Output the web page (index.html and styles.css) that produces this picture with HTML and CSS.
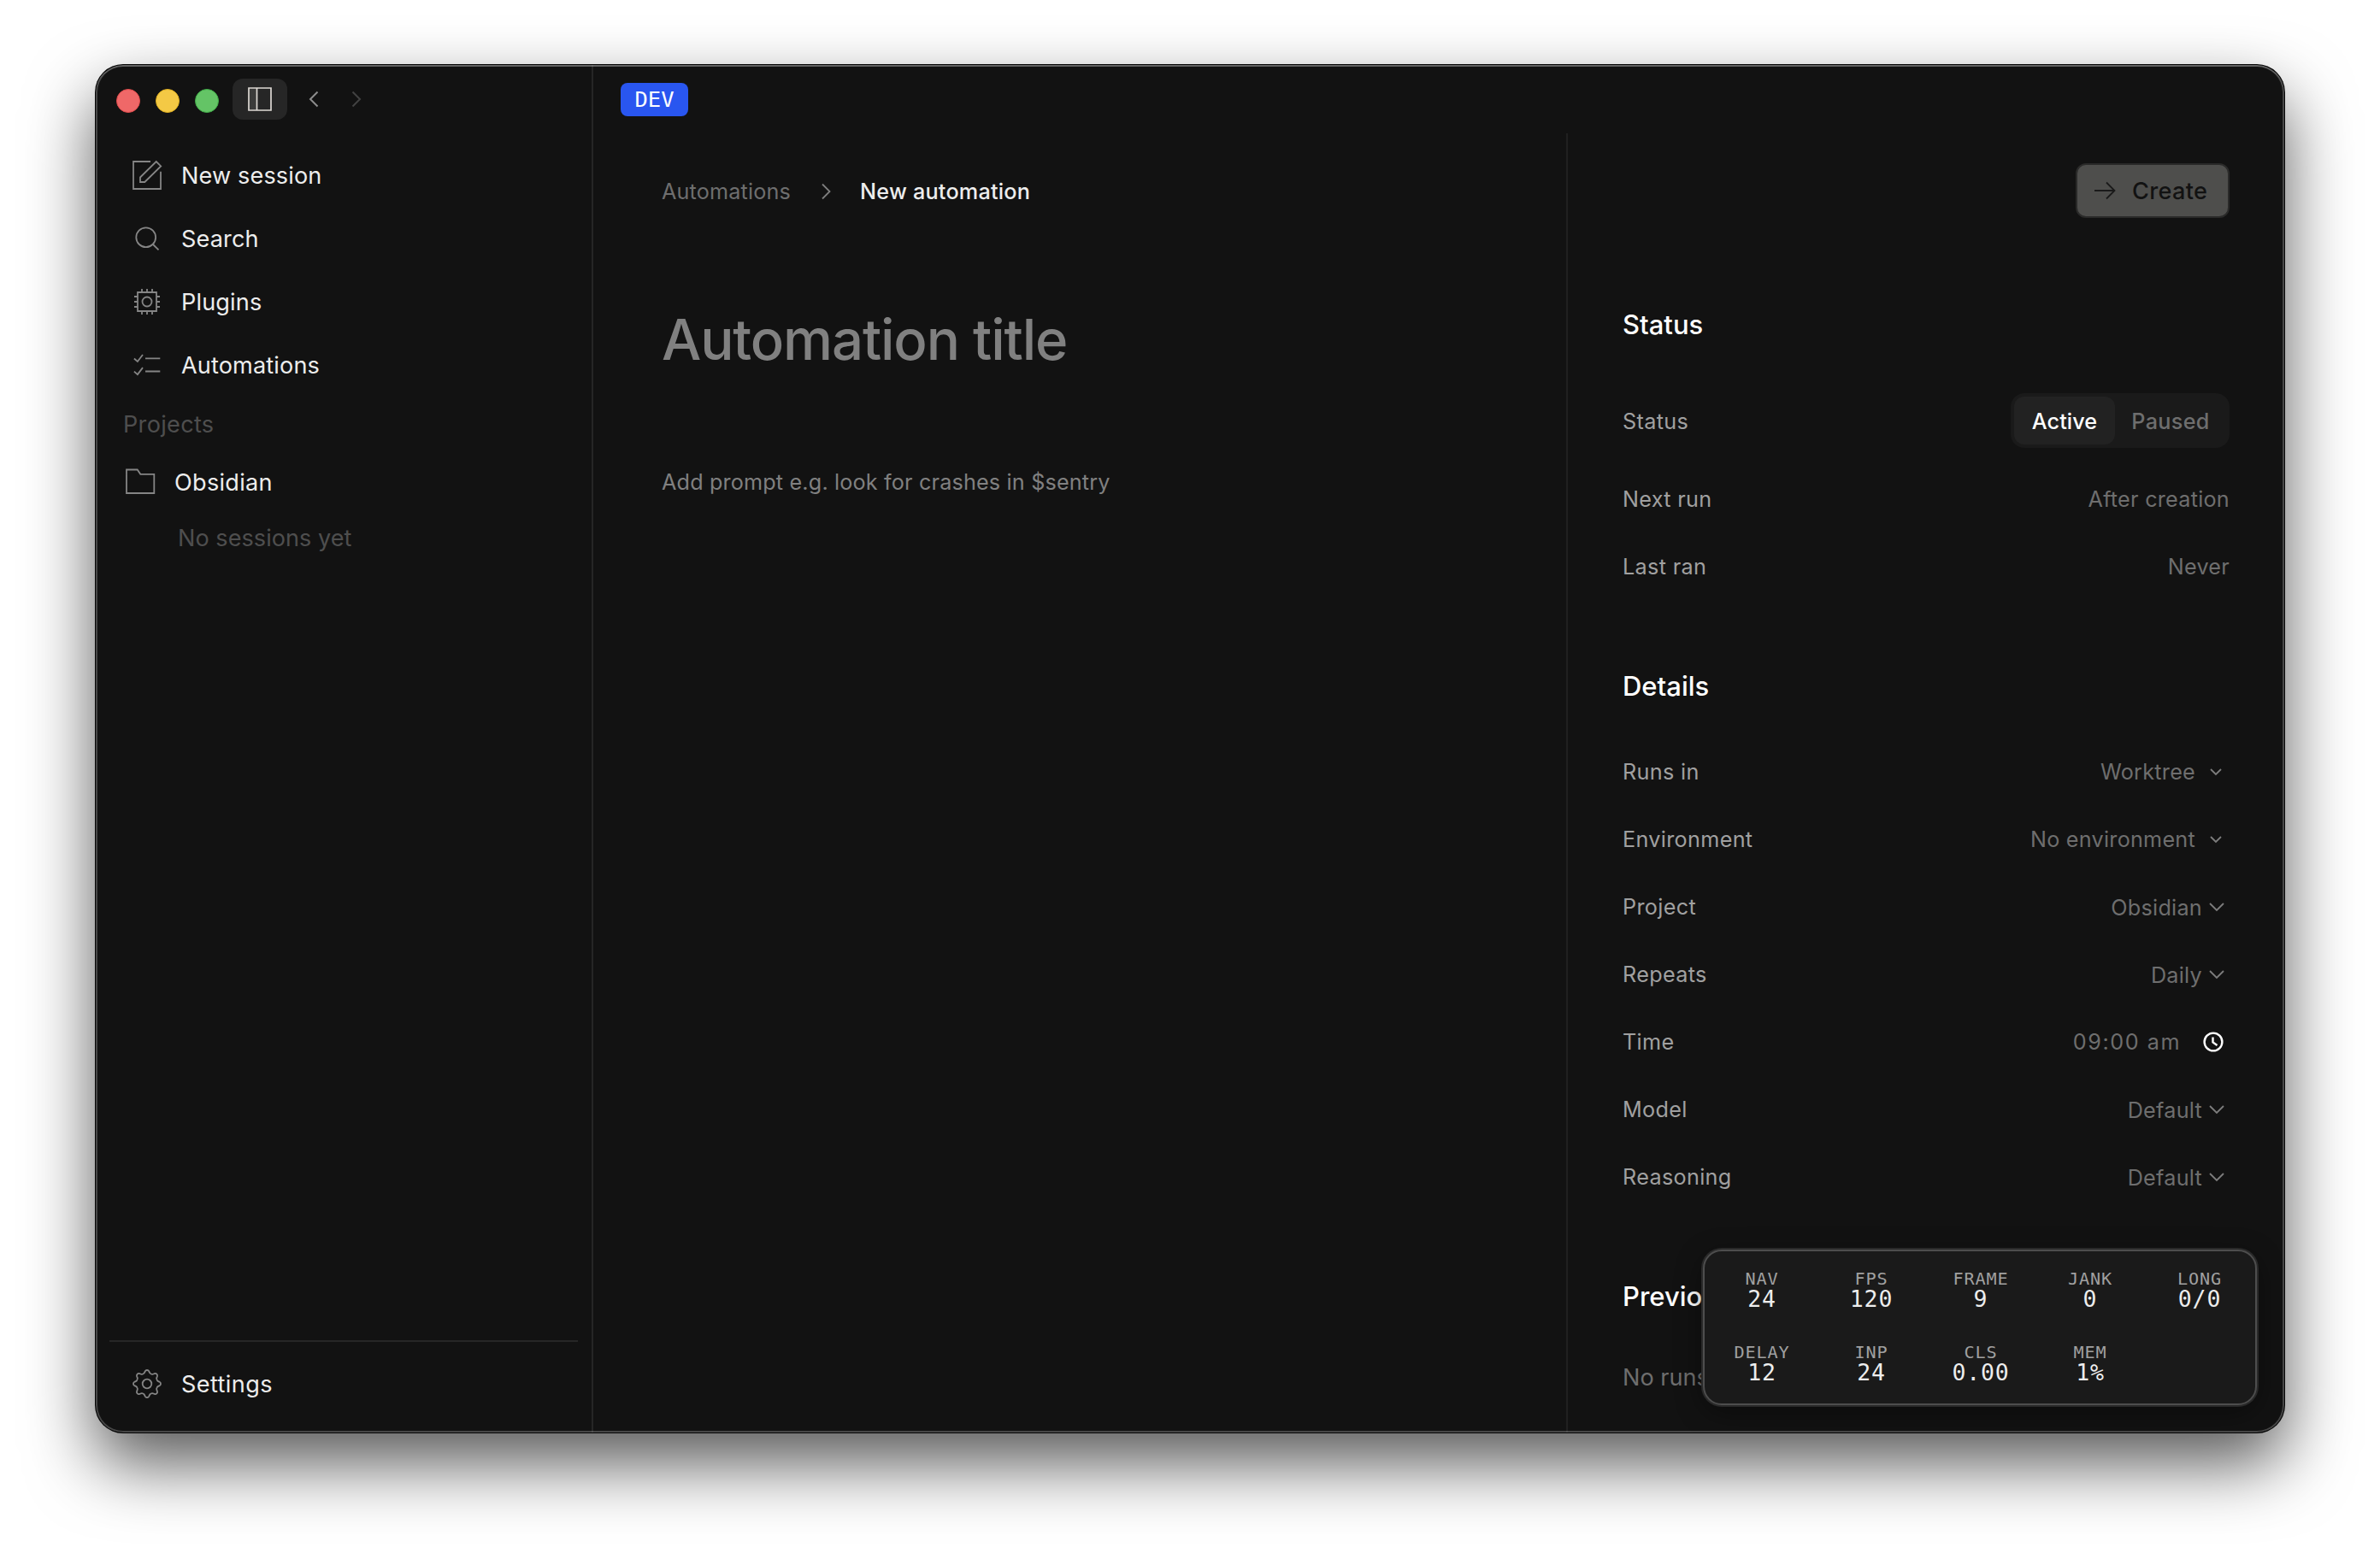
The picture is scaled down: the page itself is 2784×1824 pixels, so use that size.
FILE: index.html
```html
<!DOCTYPE html>
<html lang="en">
<head>
<meta charset="utf-8">
<title>New automation</title>
<link rel="stylesheet" href="styles.css">
</head>
<body>
<div class="window">
  <aside class="sidebar">
    <div class="titlebar">
      <div class="lights"><i class="light red"></i><i class="light yellow"></i><i class="light green"></i></div>
      <button class="toggle"><svg width="28" height="28" viewBox="0 0 28 28"><path d="M2 2h8v24H2z" fill="#3b3b3a"/><path d="M1 1h26v26H1zM10.500 1v26" fill="none" stroke="#dedad5" stroke-width="1.700"/></svg></button>
      <svg class="hist" width="48" height="48" viewBox="0 0 48 48"><path d="M28.500 15.500 20 24l8.500 8.500"/></svg>
      <svg class="hist off" width="48" height="48" viewBox="0 0 48 48"><path d="M19.500 15.500 28 24l-8.500 8.500"/></svg>
    </div>
    <nav class="nav">
      <a class="item"><svg class="ic" width="36" height="36" viewBox="0 0 36 36"><path d="M22 2H2v32h32V13.700M28.700 2l5.500 5.400L15.300 26H10v-5.500z"/></svg><span>New session</span></a>
      <a class="item"><svg class="ic" width="36" height="36" viewBox="0 0 36 36"><circle cx="16.700" cy="16.700" r="11.400"/><path d="m25 25 6.500 6.300"/></svg><span>Search</span></a>
      <a class="item"><svg class="ic" width="36" height="36" viewBox="0 0 36 36"><path d="M7 7h22v22H7zM12 3v4M18 3v4M24 3v4M12 29v4M18 29v4M24 29v4M3 12h4M3 18h4M3 24h4M29 12h4M29 18h4M29 24h4"/><circle cx="18" cy="18" r="5.500"/></svg><span>Plugins</span></a>
      <a class="item"><svg class="ic" width="36" height="36" viewBox="0 0 36 36"><path d="m2.900 10.500 4 3.500L13 6M16 10.300h17.300M2.900 25.600l4 3.500 6.100-8M16 25.500h17.300"/></svg><span>Automations</span></a>
    </nav>
    <div class="group"><span>Projects</span></div>
    <a class="project"><svg class="ic" width="36" height="36" viewBox="0 0 36 36"><path d="M2 3.500h12.700l3.600 5.300h16V31H2z"/></svg><span>Obsidian</span></a>
    <div class="empty"><span>No sessions yet</span></div>
    <div class="footer">
      <a class="item"><svg class="ic" width="36" height="36" viewBox="-18 -18 36 36"><defs><path id="tooth" d="M-4.900-11.800C-3.300-11.400-2.900-13-2.300-14.600Q-1.600-16 0-16Q1.600-16 2.300-14.600C2.900-13 3.300-11.400 4.900-11.800"/></defs><use href="#tooth"/><use href="#tooth" transform="rotate(45)"/><use href="#tooth" transform="rotate(90)"/><use href="#tooth" transform="rotate(135)"/><use href="#tooth" transform="rotate(180)"/><use href="#tooth" transform="rotate(225)"/><use href="#tooth" transform="rotate(270)"/><use href="#tooth" transform="rotate(315)"/><circle r="5.300"/></svg><span>Settings</span></a>
    </div>
  </aside>
  <main class="main">
    <header class="topbar"><span class="dev">DEV</span></header>
    <div class="columns">
      <section class="editor">
        <div class="crumbs"><span>Automations</span><svg width="20" height="20" viewBox="0 0 20 20"><path d="m6 1.500 8.500 8.500L6 18.500" fill="none" stroke="#7d7d7d" stroke-width="1.800"/></svg><b>New automation</b></div>
        <h1 class="title">Automation title</h1>
        <p class="prompt">Add prompt e.g. look for crashes in $sentry</p>
      </section>
      <section class="details">
        <button class="create"><svg width="26" height="24" viewBox="0 0 26 24"><path d="M1 12h23.500M15 2.500l9.500 9.500-9.500 9.500" fill="none" stroke="#1a1a1a" stroke-width="1.800"/></svg><span>Create</span></button>
        <h2>Status</h2>
        <div class="row status"><span>Status</span><div class="seg"><b class="on">Active</b><b>Paused</b></div></div>
        <div class="rows first">
          <div class="row"><span>Next run</span><em>After creation</em></div>
          <div class="row"><span>Last ran</span><em>Never</em></div>
        </div>
        <h2>Details</h2>
        <div class="rows">
          <div class="row"><span>Runs in</span><em><span>Worktree</span><svg class="sm" width="14" height="10" viewBox="0 0 14 10"><path d="m1 2 6 6 6-6"/></svg></em></div>
          <div class="row"><span>Environment</span><em><span>No environment</span><svg class="sm" width="14" height="10" viewBox="0 0 14 10"><path d="m1 2 6 6 6-6"/></svg></em></div>
          <div class="row"><span>Project</span><em class="select"><span>Obsidian</span><svg class="lg" width="18" height="12" viewBox="0 0 18 12"><path d="m1 2 8 8 8-8"/></svg></em></div>
          <div class="row"><span>Repeats</span><em class="select"><span>Daily</span><svg class="lg" width="18" height="12" viewBox="0 0 18 12"><path d="m1 2 8 8 8-8"/></svg></em></div>
          <div class="row"><span>Time</span><em><span class="time">09:00 am</span><svg class="clock" width="26" height="26" viewBox="0 0 26 26"><circle cx="13" cy="13" r="10.400"/><path d="M12.500 7.500v6l5 3.500"/></svg></em></div>
          <div class="row"><span>Model</span><em class="select"><span>Default</span><svg class="lg" width="18" height="12" viewBox="0 0 18 12"><path d="m1 2 8 8 8-8"/></svg></em></div>
          <div class="row"><span>Reasoning</span><em class="select"><span>Default</span><svg class="lg" width="18" height="12" viewBox="0 0 18 12"><path d="m1 2 8 8 8-8"/></svg></em></div>
        </div>
        <h2>Previous runs</h2>
        <p class="none">No runs yet</p>
      </section>
    </div>
  </main>
  <div class="perf">
    <div><small>NAV</small><span>24</span></div>
    <div><small>FPS</small><span>120</span></div>
    <div><small>FRAME</small><span>9</span></div>
    <div><small>JANK</small><span>0</span></div>
    <div><small>LONG</small><span>0/0</span></div>
    <div><small>DELAY</small><span>12</span></div>
    <div><small>INP</small><span>24</span></div>
    <div><small>CLS</small><span>0.00</span></div>
    <div><small>MEM</small><span>1%</span></div>
  </div>
</div>
</body>
</html>
```
FILE: styles.css
```css
* { box-sizing: border-box; margin: 0; padding: 0; }
body { width: 2784px; height: 1824px; overflow: hidden; background: #fff; padding: 76px 112px; font-family: Inter, "Liberation Sans", sans-serif; font-size: 27.1px; line-height: 34px; color: #ededed; }
button { border: 0; font: inherit; color: inherit; }
b, em, i, h1, h2 { font-weight: 500; font-style: normal; }
.window { position: relative; width: 2560px; height: 1600px; display: flex; background: #121212; border-radius: 32px; box-shadow: 0 0 0 1px #050505, 0 36px 80px rgba(0,0,0,.66); overflow: hidden; }
.window::after { content: ""; position: absolute; inset: 0; border-radius: 32px; box-shadow: inset 0 0 0 2px rgba(255,255,255,.22), inset 0 2px 0 rgba(255,255,255,.15); pointer-events: none; }
.sidebar { width: 582px; border-right: 2px solid #262626; display: flex; flex-direction: column; letter-spacing: .005em; }
.titlebar { height: 80px; display: flex; align-items: center; padding-left: 24px; }
.lights { display: flex; gap: 18px; margin: 4px 16px 0 0; }
.light { width: 28px; height: 28px; border-radius: 50%; border: 1px solid; }
.red { background: #ef6868; border-color: #e04b4c; }
.yellow { background: #f4c945; border-color: #e0b021; }
.green { background: #64c466; border-color: #41ad48; }
.toggle { width: 64px; height: 48px; border-radius: 12px; background: #262626; display: flex; align-items: center; justify-content: center; margin-right: 7px; }
.hist { fill: none; stroke: #8c8c8c; stroke-width: 2; }
.hist.off { stroke: #424242; margin-left: 2px; }
.nav { padding-top: 12px; }
.item { display: flex; align-items: center; gap: 22px; height: 74px; padding-left: 42px; }
.item span, .project span, .group span, .empty span { padding-top: 2px; }
.ic { fill: none; stroke: #858585; stroke-width: 1.8; }
.group { height: 64px; padding-left: 32px; color: #4e4e4e; letter-spacing: .011em; display: flex; align-items: center; }
.project { height: 72px; padding-left: 34px; letter-spacing: .011em; display: flex; align-items: center; gap: 22px; }
.empty { height: 58px; padding-left: 96px; color: #4e4e4e; letter-spacing: .001em; display: flex; align-items: center; }
.footer { margin: auto 16px 0; border-top: 2px solid #262626; height: 108px; }
.footer .item { height: 98px; padding-left: 26px; letter-spacing: .015em; }
.main { flex: 1; display: flex; flex-direction: column; }
.topbar { height: 80px; display: flex; padding: 21px 32px; }
.dev { width: 79px; height: 39px; border-radius: 8px; background: #2956f0; color: #fff; font: 25.5px/39px "DejaVu Sans Mono", monospace; text-align: center; }
.columns { flex: 1; display: flex; min-height: 0; }
.editor { flex: 1; padding: 48px 80px; font-size: 25.2px; letter-spacing: .0065em; }
.crumbs { height: 40px; display: flex; align-items: center; color: #6e6e6e; }
.crumbs svg { margin: 0 30px 0 31px; }
.crumbs b { color: #ededed; font-weight: 450; letter-spacing: .009em; }
.title { margin-top: 114px; height: 80px; font-size: 65.3px; line-height: 80px; color: #808080; letter-spacing: -.0172em; }
.prompt { margin-top: 106px; height: 40px; line-height: 40px; color: #808080; }
.details { width: 840px; border-left: 2px solid #202020; padding: 35px 64px 0; font-size: 25.2px; letter-spacing: .013em; }
.create { margin-left: auto; width: 180px; height: 64px; border-radius: 12px; border: 2px solid #2a2a29; background: #4e4e4c; color: #121212; font-size: 27.1px; font-weight: 500; letter-spacing: .012em; display: flex; align-items: center; padding-left: 19px; gap: 19px; }
.create span { padding-top: 1px; }
h2 { margin-top: 101px; height: 40px; line-height: 40px; font-size: 31px; color: #fff; letter-spacing: 0; }
.create + h2 { margin-top: 105px; }
.row { display: flex; align-items: center; justify-content: space-between; height: 39px; color: #a0a0a0; }
.row > span { padding-top: 1px; }
.row em { display: flex; align-items: center; color: #6e6e6e; font-weight: 400; letter-spacing: .01em; padding-top: 1px; }
.select span { padding-top: 1px; }
.time { letter-spacing: .061em; }
.row.status { margin-top: 60px; height: 64px; }
.row.status > span { padding-top: 2px; }
.seg { display: flex; padding: 4px; height: 64px; border-radius: 16px; background: #1a1a1a; color: #6e6e6e; line-height: 58px; text-align: center; }
.seg b { width: 130px; height: 56px; border-radius: 12px; font-weight: 450; }
.seg .on { width: 118px; background: #222; color: #fff; letter-spacing: .003em; font-weight: 500; }
.rows { display: flex; flex-direction: column; gap: 40px; margin-top: 60px; }
.rows.first { margin-top: 40px; }
.rows svg { fill: none; stroke: #7d7d7d; stroke-width: 1.8; }
.sm { margin: 0 9px 0 17px; }
.lg { margin: 0 6px 0 8px; }
.rows .clock { stroke: #fff; stroke-width: 2.4; margin: 0 6px 0 25px; }
.none { margin-top: 58px; color: #6e6e6e; font-size: 27.1px; letter-spacing: 0; }
.perf { position: absolute; left: 1880px; top: 1386px; width: 648px; height: 182px; border: 2px solid #4d4d4d; border-radius: 22px; background: #1a1a1a; box-shadow: 0 0 0 2px #292929, 0 8px 32px rgba(0,0,0,.4); padding: 20px 1px 20px 3px; display: grid; grid-template-columns: repeat(5, 128px); grid-auto-rows: 86px; text-align: center; font-family: "DejaVu Sans Mono", monospace; letter-spacing: .03em; }
.perf div { display: flex; flex-direction: column; align-items: center; }
.perf small { font-size: 20.2px; line-height: 24px; color: #a0a0a0; }
.perf span { font-size: 26.5px; line-height: 24px; }
```
